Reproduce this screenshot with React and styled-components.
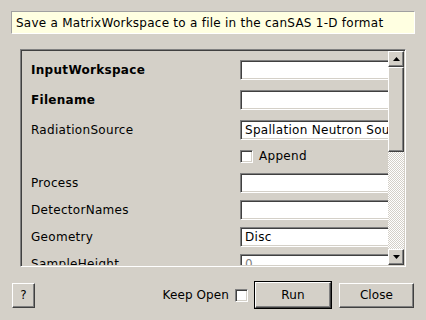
import React from "react";
import styled, { createGlobalStyle, css } from "styled-components";

const Global = createGlobalStyle`
  html, body { margin: 0; padding: 0; background: #d4d0c8; }
  body { font-family: "DejaVu Sans", "Liberation Sans", sans-serif; font-size: 12px; color: #000; letter-spacing: 0.3px; }
  * { box-sizing: border-box; }
`;

const sunken = css`
  border-style: solid;
  border-width: 1px;
  border-color: #808080 #ffffff #ffffff #808080;
  box-shadow: inset 1px 1px 0 #404040, inset -1px -1px 0 #d4d0c8;
`;

const raised = css`
  border-style: solid;
  border-width: 1px;
  border-color: #ffffff #404040 #404040 #ffffff;
  box-shadow: inset -1px -1px 0 #808080;
  background: #d4d0c8;
`;

const Dialog = styled.div`
  width: 426px;
  height: 320px;
  display: flex;
  flex-direction: column;
  overflow: hidden;
`;

const Description = styled.div`
  margin: 11px 11px 0 11px;
  height: 23px;
  background: #ffffe1;
  border-style: solid;
  border-width: 1px;
  border-color: #a0a0a0 #ffffff #ffffff #a0a0a0;
  padding: 0 4px;
  display: flex;
  align-items: center;
  white-space: nowrap;
  letter-spacing: 0.25px;
`;

const Frame = styled.div`
  margin: 15px 0 0 20px;
  width: 386px;
  height: 218px;
  padding: 1px;
  ${sunken};
  display: flex;
`;

const Viewport = styled.div`
  flex: 1;
  overflow: hidden;
  padding: 9px 0 0 9px;
  display: flex;
  flex-direction: column;
`;

const Row = styled.div`
  display: grid;
  grid-template-columns: 209px 170px;
  align-items: center;
  margin-top: ${(p) => p.$top || 0}px;
  flex-shrink: 0;
`;

const Label = styled.div`
  font-weight: ${(p) => (p.$bold ? "bold" : "normal")};
  white-space: nowrap;
`;

const Field = styled.div`
  height: 20px;
  width: 170px;
  background: #ffffff;
  ${sunken};
  padding: 0 4px;
  display: flex;
  align-items: center;
  white-space: nowrap;
  overflow: hidden;
  color: ${(p) => (p.$muted ? "#808080" : "#000")};
`;

const CheckLine = styled.label`
  display: flex;
  align-items: center;
  gap: 6px;
  height: 13px;
  line-height: 13px;
  white-space: nowrap;
`;

const Box = styled.span`
  width: 13px;
  height: 13px;
  background: #ffffff;
  ${sunken};
  display: inline-block;
  flex-shrink: 0;
`;

const ScrollBar = styled.div`
  width: 16px;
  display: flex;
  flex-direction: column;
`;

const ArrowButton = styled.div`
  height: 16px;
  ${raised};
  display: flex;
  align-items: center;
  justify-content: center;
  flex-shrink: 0;
`;

const Thumb = styled.div`
  height: 85px;
  ${raised};
  flex-shrink: 0;
`;

const Track = styled.div`
  flex: 1;
  background: repeating-conic-gradient(#ffffff 0 25%, #d4d0c8 0 50%) 0 0 / 2px 2px;
`;

const Footer = styled.div`
  margin-top: 15px;
  padding: 0 12px;
  display: flex;
  align-items: center;
  letter-spacing: 0.1px;
`;

const Button = styled.button`
  font: inherit;
  letter-spacing: inherit;
  color: #000;
  height: ${(p) => (p.$default ? 26 : 25)}px;
  width: ${(p) => p.$w}px;
  margin-left: ${(p) => p.$gap || 0}px;
  padding: 0;
  ${raised};
  ${(p) =>
    p.$default &&
    css`
      outline: 1px solid #000;
      outline-offset: 0;
    `}
`;

const Spacer = styled.div`
  flex: 1;
`;

const KeepOpen = styled.label`
  display: flex;
  align-items: center;
  gap: 6px;
  margin-right: 7px;
`;

const Arrow = ({ down }) => (
  <svg width="7" height="4" viewBox="0 0 7 4">
    <polygon points={down ? "0,0 7,0 3.5,4" : "0,4 7,4 3.5,0"} fill="#000" />
  </svg>
);

const rows = [
  { label: "InputWorkspace", bold: true, top: 0 },
  { label: "Filename", bold: true, top: 10 },
  { label: "RadiationSource", value: "Spallation Neutron Source", top: 10 },
];
const rows2 = [
  { label: "Process", top: 10 },
  { label: "DetectorNames", top: 7 },
  { label: "Geometry", value: "Disc", top: 7 },
  { label: "SampleHeight", value: "0", muted: true, top: 7 },
];

export default function App() {
  return (
    <Dialog>
      <Global />
      <Description>Save a MatrixWorkspace to a file in the canSAS 1-D format</Description>
      <Frame>
        <Viewport>
          {rows.map((r) => (
            <Row key={r.label} $top={r.top}>
              <Label $bold={r.bold}>{r.label}</Label>
              <Field>{r.value}</Field>
            </Row>
          ))}
          <Row $top={10}>
            <span />
            <CheckLine>
              <Box />
              Append
            </CheckLine>
          </Row>
          {rows2.map((r) => (
            <Row key={r.label} $top={r.top}>
              <Label>{r.label}</Label>
              <Field $muted={r.muted}>{r.value}</Field>
            </Row>
          ))}
        </Viewport>
        <ScrollBar>
          <ArrowButton>
            <Arrow />
          </ArrowButton>
          <Thumb />
          <Track />
          <ArrowButton>
            <Arrow down />
          </ArrowButton>
        </ScrollBar>
      </Frame>
      <Footer>
        <Button $w={23}>?</Button>
        <Spacer />
        <KeepOpen>
          Keep Open
          <Box />
        </KeepOpen>
        <Button $w={76} $default>
          Run
        </Button>
        <Button $w={75} $gap={8}>
          Close
        </Button>
      </Footer>
    </Dialog>
  );
}
